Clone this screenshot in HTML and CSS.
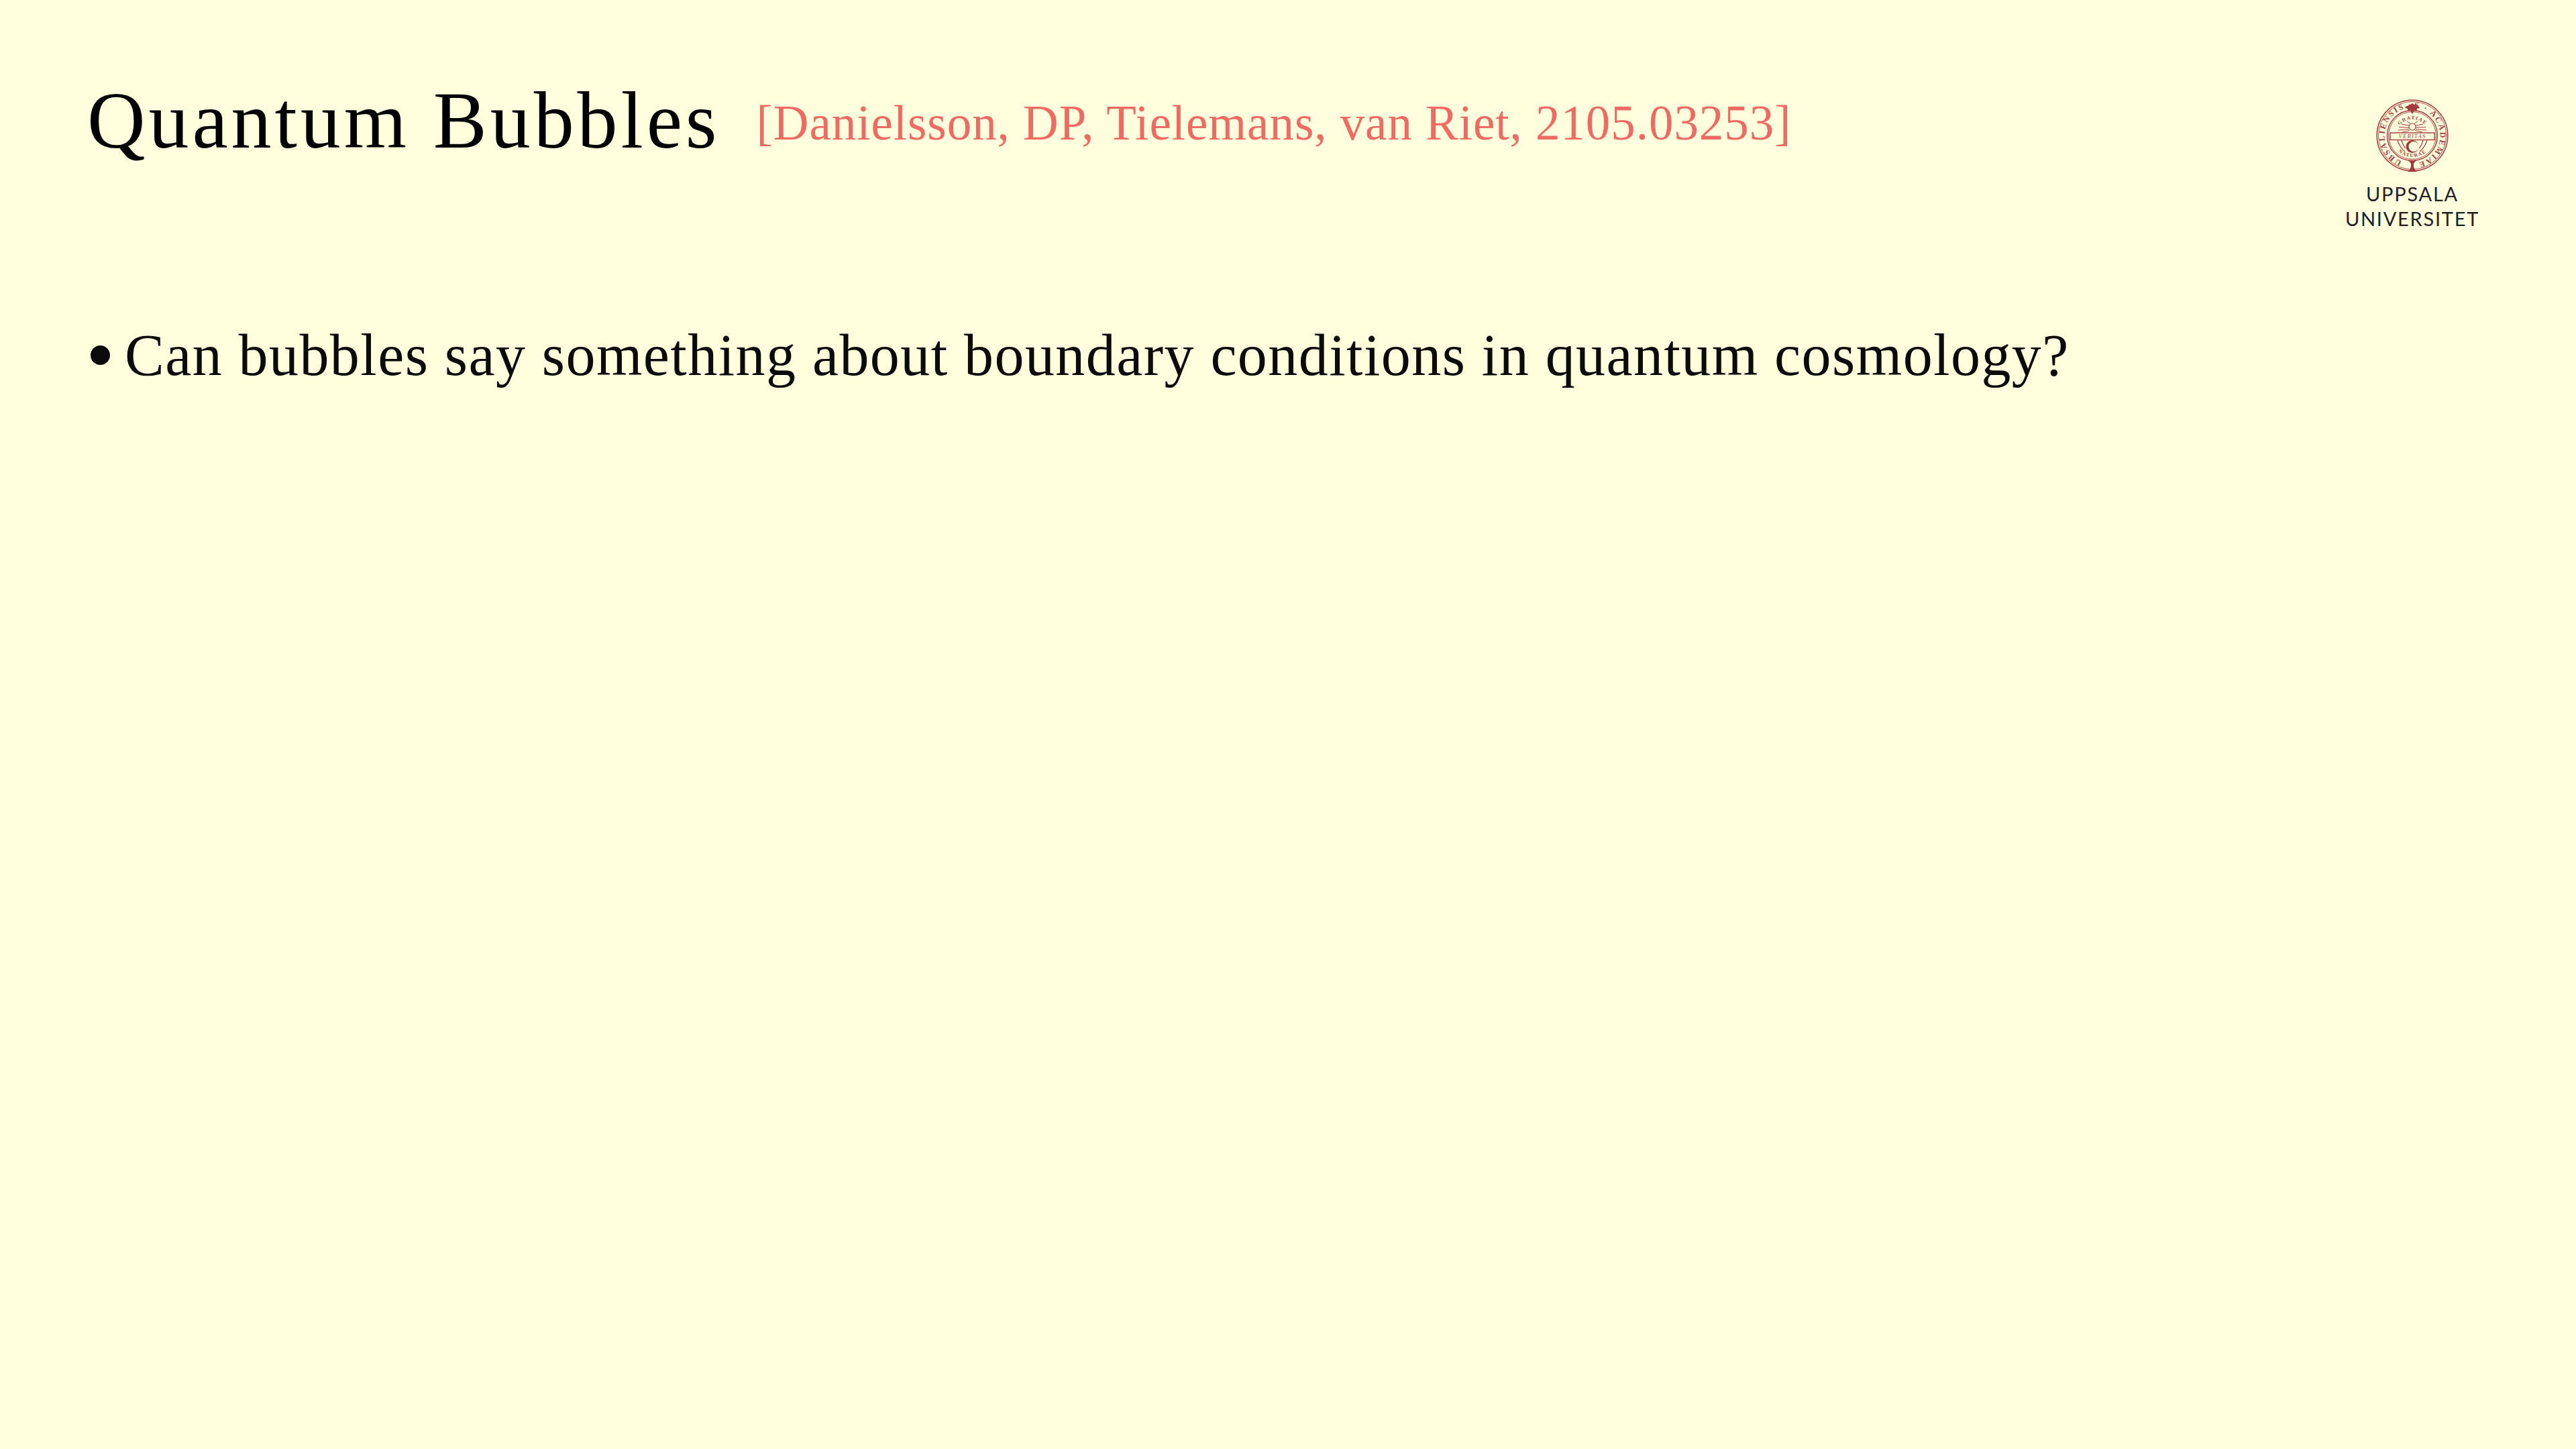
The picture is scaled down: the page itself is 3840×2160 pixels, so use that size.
FILE: index.html
```html
<!DOCTYPE html>
<html lang="en">
<head>
<meta charset="utf-8">
<title>Quantum Bubbles</title>
<link rel="stylesheet" href="styles.css">
</head>
<body>
<main class="slide">
  <header class="head">
    <h1 class="title">Quantum Bubbles</h1>
    <span class="cite">[Danielsson, DP, Tielemans, van Riet, 2105.03253]</span>
    <div class="logo">
      <svg class="seal" viewBox="0 0 120 120" width="120" height="120" aria-hidden="true">
        <defs>
          <path id="ring" d="M60 101.5 a41.5 41.5 0 1 1 0.01 0"/>
          <path id="innerTop" d="M34 62 a26 26 0 0 1 52 0"/>
          <path id="innerBottom" d="M28 60 a32 32 0 0 0 64 0"/>
        </defs>
        <g class="seal-lines">
          <circle cx="60" cy="60" r="52.8" stroke-width="1.5"/>
          <circle cx="60" cy="60" r="50.6" stroke-width="0.9"/>
          <circle cx="60" cy="60" r="37.5" stroke-width="1.4"/>
          <circle cx="60" cy="60" r="35.4" stroke-width="0.9"/>
          <path d="M55 45 L44 43 M55 48 L40 47.5 M55 50.5 L39 52 M56 52.5 L45 55 M65 45 L76 43 M65 48 L80 47.5 M65 50.5 L81 52 M64 52.5 L75 55 M57 42 L52 39 M63 42 L68 39" stroke-width="1"/>
          <circle cx="60" cy="47" r="5" stroke-width="1.1" class="seal-sun"/>
          <path d="M38 67 q3 10 11 17 M82 67 q-3 10 -11 17 M44 67 q2 8 6 12 M76 67 q-2 8 -6 12" stroke-width="1.1"/>
          <rect x="27" y="56" width="66" height="10.5" stroke-width="1.4" class="seal-band-box"/>
        </g>
        <path class="seal-crest seal-moon" d="M60 67 a9.5 9.5 0 1 0 0 19 a9.5 9.5 0 1 0 0 -19 z M62 69 a7.5 7.5 0 1 1 0 15 a7.5 7.5 0 1 1 0 -15 z"/>
        <g class="seal-text">
          <text class="seal-outer"><textPath href="#ring" startOffset="26%">UBSALIENSIS</textPath></text>
          <text class="seal-outer"><textPath href="#ring" startOffset="74%">S · ACADEMIAE</textPath></text>
          <text class="seal-inner"><textPath href="#innerTop" startOffset="50%">GRATIAE</textPath></text>
          <text class="seal-inner"><textPath href="#innerBottom" startOffset="50%">NATURAE</textPath></text>
          <text class="seal-band" x="60" y="64">VERITAS</text>
        </g>
        <path class="seal-crest" d="M49 19 q2 -4 5 -3 q0 -3 3 -2 l3 -2 3 2 q3 -1 3 2 q3 -1 5 3 l-4 1 -1 4 -3 -2 -2 5 h-2 l-2 -5 -3 2 -1 -4 z"/>
        <path class="seal-crest" d="M53 114 q4 -3 5 -8 v-4 q-1 -3 -5 -5 h14 q-4 2 -5 5 v4 q1 5 5 8 z"/>
      </svg>
      <div class="wordmark">UPPSALA<br>UNIVERSITET</div>
    </div>
  </header>
  <ul class="points">
    <li class="point"><span class="bullet"></span><span>Can bubbles say something about boundary conditions in quantum cosmology?</span></li>
  </ul>
</main>
</body>
</html>
```
FILE: styles.css
```css
* { box-sizing: border-box; }
html, body { margin: 0; padding: 0; }
body { background: #ffffdd; font-family: "Liberation Serif", "Times New Roman", serif; color: #0b0b0b; }
.slide { width: 3840px; height: 2160px; padding: 0 130px; display: flex; flex-direction: column; }
.head { display: flex; align-items: baseline; height: 475px; padding-top: 110px; position: relative; }
.title { margin: 0; font-size: 120px; line-height: 140px; font-weight: 400; letter-spacing: 4.9px; color: #000; }
.cite { margin-left: 54px; font-size: 73px; letter-spacing: 0.95px; color: #ee6a62; position: relative; top: -12px; }
.logo { position: absolute; top: 142px; left: 3349px; width: 234px; display: flex; flex-direction: column; align-items: center; }
.seal { display: block; }
.seal-lines { fill: none; stroke: #a33a3c; }
.seal-sun { fill: #ffffdd; }
.seal-band-box { fill: #ffffdd; }
.seal-moon { fill-rule: evenodd; }
.seal-text { fill: #a33a3c; font-family: "Liberation Serif", serif; font-weight: 700; text-anchor: middle; }
.seal-outer { font-size: 12px; letter-spacing: 2.2px; }
.seal-inner { font-size: 7.5px; letter-spacing: 1.3px; }
.seal-band { font-size: 8.5px; letter-spacing: 1.3px; font-style: italic; font-weight: 400; }
.seal-crest { fill: #a33a3c; }
.wordmark { margin-top: 8px; font-family: Lato, "Open Sans", sans-serif; font-size: 29px; line-height: 37px; font-weight: 400; text-align: center; color: #222; letter-spacing: 1.75px; white-space: nowrap; }
.points { list-style: none; margin: 0; padding: 0; }
.point { display: flex; align-items: baseline; font-size: 88px; line-height: 110px; letter-spacing: 1.44px; color: #0b0b0b; }
.bullet { width: 29px; height: 29px; border-radius: 50%; background: #0b0b0b; margin: 0 22px 0 5px; flex: none; position: relative; top: -15px; }
```
